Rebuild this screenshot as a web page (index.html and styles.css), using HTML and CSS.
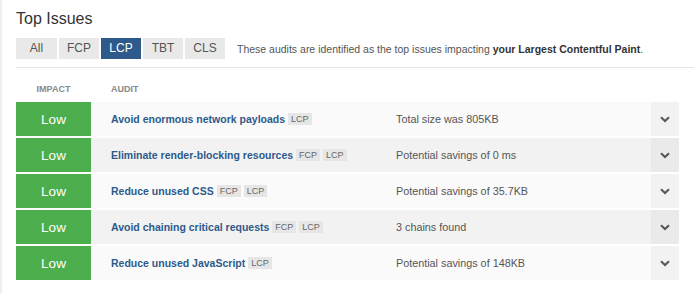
FILE: index.html
```html
<!DOCTYPE html>
<html lang="en">

<head>
    <meta charset="UTF-8">
    <meta name="viewport" content="width=device-width, initial-scale=1.0">
    <title>Top Issues</title>
    <link rel="stylesheet" href="styles.css">
</head>

<body>
    <div class="panel">
        <h2 class="panel-title">Top Issues</h2>

        <div class="filter-bar">
            <div class="tabs">
                <span class="tab">All</span>
                <span class="tab">FCP</span>
                <span class="tab active">LCP</span>
                <span class="tab">TBT</span>
                <span class="tab">CLS</span>
            </div>
            <p class="filter-note">These audits are identified as the top issues impacting <b>your Largest Contentful Paint</b>.</p>
        </div>

        <div class="divider"></div>

        <div class="audits">
            <div class="audits-head">
                <span class="col-impact">Impact</span>
                <span class="col-audit">Audit</span>
            </div>

            <!-- one row per audit -->
            <div class="audit-row">
                <div class="impact low">Low</div>
                <div class="audit-name">
                    <a href="#">Avoid enormous network payloads</a>
                    <span class="tag">LCP</span>
                </div>
                <div class="audit-detail">Total size was 805KB</div>
                <div class="toggle"><svg width="10" height="7" viewBox="0 0 10 7"><path d="M1 1.2 L5 5 L9 1.2" fill="none" stroke="#555" stroke-width="2"/></svg></div>
            </div>

            <div class="audit-row">
                <div class="impact low">Low</div>
                <div class="audit-name">
                    <a href="#">Eliminate render-blocking resources</a>
                    <span class="tag">FCP</span>
                    <span class="tag">LCP</span>
                </div>
                <div class="audit-detail">Potential savings of 0 ms</div>
                <div class="toggle"><svg width="10" height="7" viewBox="0 0 10 7"><path d="M1 1.2 L5 5 L9 1.2" fill="none" stroke="#555" stroke-width="2"/></svg></div>
            </div>

            <div class="audit-row">
                <div class="impact low">Low</div>
                <div class="audit-name">
                    <a href="#">Reduce unused CSS</a>
                    <span class="tag">FCP</span>
                    <span class="tag">LCP</span>
                </div>
                <div class="audit-detail">Potential savings of 35.7KB</div>
                <div class="toggle"><svg width="10" height="7" viewBox="0 0 10 7"><path d="M1 1.2 L5 5 L9 1.2" fill="none" stroke="#555" stroke-width="2"/></svg></div>
            </div>

            <div class="audit-row">
                <div class="impact low">Low</div>
                <div class="audit-name">
                    <a href="#">Avoid chaining critical requests</a>
                    <span class="tag">FCP</span>
                    <span class="tag">LCP</span>
                </div>
                <div class="audit-detail">3 chains found</div>
                <div class="toggle"><svg width="10" height="7" viewBox="0 0 10 7"><path d="M1 1.2 L5 5 L9 1.2" fill="none" stroke="#555" stroke-width="2"/></svg></div>
            </div>

            <div class="audit-row">
                <div class="impact low">Low</div>
                <div class="audit-name">
                    <a href="#">Reduce unused JavaScript</a>
                    <span class="tag">LCP</span>
                </div>
                <div class="audit-detail">Potential savings of 148KB</div>
                <div class="toggle"><svg width="10" height="7" viewBox="0 0 10 7"><path d="M1 1.2 L5 5 L9 1.2" fill="none" stroke="#555" stroke-width="2"/></svg></div>
            </div>
        </div>
    </div>
</body>

</html>
```

FILE: styles.css
```css
/* Page */

body {
    margin: 0;
    background-color: #ffffff;
    font-family: 'Liberation Sans', Arial, sans-serif;
    color: #555;
}

.panel {
    border-left: 2px solid #efefef;
    padding: 8px 0 13px 14px;
}

.panel-title {
    margin: 0 0 9px 0;
    font-size: 16px;
    font-weight: normal;
    color: #333;
    line-height: 21px;
}
/* Tabs + note */

.filter-bar {
    display: flex;
    align-items: center;
}

.tabs {
    display: flex;
    gap: 2px;
}

.tab {
    width: 40px;
    height: 21px;
    line-height: 21px;
    text-align: center;
    font-size: 12px;
    background-color: #e9e9e9;
    color: #555;
}

.tab:first-child {
    width: 41px;
}

.tab.active {
    background-color: #2d5a8b;
    color: #ffffff;
}

.filter-note {
    margin: 0 0 0 12px;
    font-size: 10.5px;
    color: #555;
}

.filter-note b {
    color: #333;
}

.divider {
    height: 1px;
    background-color: #e6e6e6;
    margin-top: 8px;
}
/* Audit table */

.audits {
    margin-right: 15px;
}

.audits-head {
    display: flex;
    align-items: center;
    height: 26px;
    padding-top: 8px;
    font-size: 9px;
    font-weight: bold;
    text-transform: uppercase;
    color: #888;
}

.col-impact {
    width: 75px;
    text-align: center;
}

.col-audit {
    margin-left: 20px;
}

.audit-row {
    display: flex;
    align-items: center;
    height: 34px;
    margin-bottom: 2px;
    background-color: #fafafa;
}

.audit-row:nth-child(odd) {
    background-color: #f2f2f2;
}

.impact {
    width: 75px;
    height: 100%;
    display: flex;
    justify-content: center;
    align-items: center;
    font-size: 13.5px;
    color: #ffffff;
}

.impact.low {
    background-color: #4cae4c;
}

.audit-name {
    width: 285px;
    padding-left: 20px;
    display: flex;
    align-items: center;
}

.audit-name a {
    font-size: 10.5px;
    font-weight: bold;
    color: #2d5a8b;
    text-decoration: none;
}

.tag {
    margin-left: 3px;
    padding: 0 3px;
    line-height: 12px;
    font-size: 9px;
    background-color: #e6e6e6;
    color: #666;
}

.audit-detail {
    flex: 1;
    font-size: 10.8px;
    color: #555;
}

.toggle {
    width: 28px;
    height: 100%;
    display: flex;
    justify-content: center;
    align-items: center;
    background-color: #f2f2f2;
}

.audit-row:nth-child(odd) .toggle {
    background-color: #eaeaea;
}
```
